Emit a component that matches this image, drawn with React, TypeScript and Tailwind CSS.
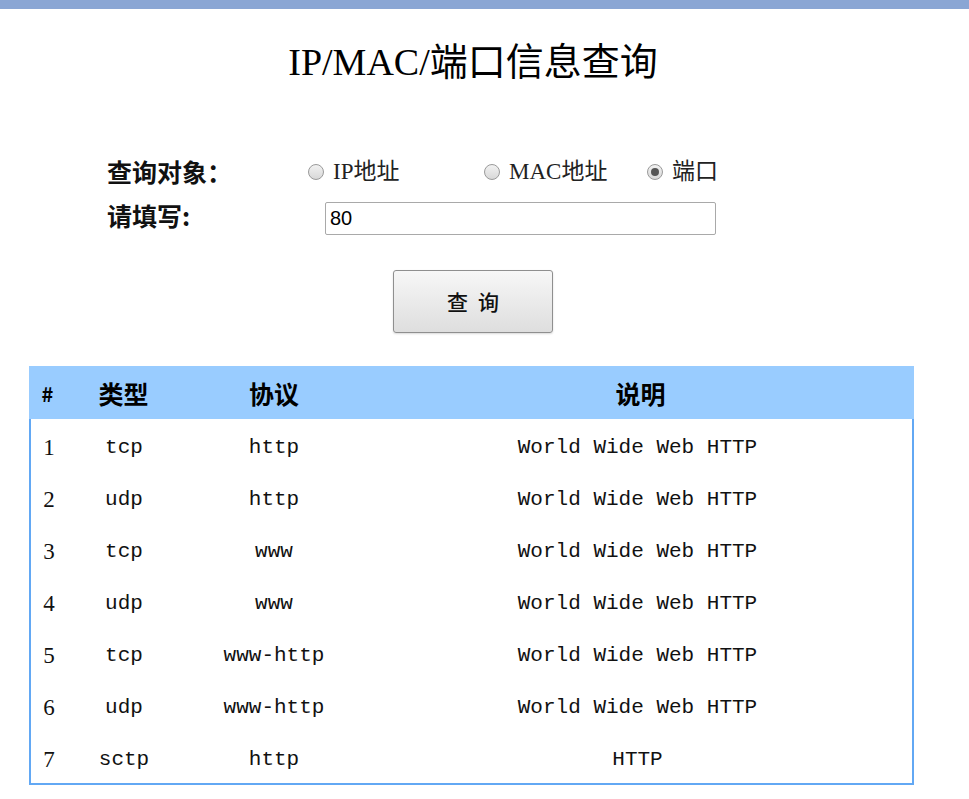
const rows = [
  { id: 1, type: "tcp", proto: "http", desc: "World Wide Web HTTP" },
  { id: 2, type: "udp", proto: "http", desc: "World Wide Web HTTP" },
  { id: 3, type: "tcp", proto: "www", desc: "World Wide Web HTTP" },
  { id: 4, type: "udp", proto: "www", desc: "World Wide Web HTTP" },
  { id: 5, type: "tcp", proto: "www-http", desc: "World Wide Web HTTP" },
  { id: 6, type: "udp", proto: "www-http", desc: "World Wide Web HTTP" },
  { id: 7, type: "sctp", proto: "http", desc: "HTTP" },
];

function Radio({ label, checked, width }: { label: string; checked?: boolean; width: string }) {
  return (
    <label className={`flex items-center gap-[9px] ${width}`}>
      <span className="flex h-[16px] w-[16px] items-center justify-center rounded-full border border-[#9a9a9a] bg-gradient-to-b from-[#f2f2f2] to-[#d8d8d8]">
        {checked && <span className="h-[8px] w-[8px] rounded-full bg-[#555]" />}
      </span>
      <span className="text-[23px] text-[#222] font-['Liberation_Serif','Noto_Sans_CJK_SC',serif]">{label}</span>
    </label>
  );
}

export default function App() {
  return (
    <div className="min-h-[799px] w-full bg-white">
      {/* top bar */}
      <div className="h-[9px] bg-[#8aa6d4]" />

      <div className="w-[946px]">
        <h1 className="mt-[30px] text-center text-[38px] leading-[46px] text-black font-['Liberation_Serif','Noto_Sans_CJK_SC',serif]">
          IP/MAC/端口信息查询
        </h1>

        {/* form */}
        <div className="ml-[107px] mt-[69px] flex flex-col gap-[8px] font-['Noto_Sans_CJK_SC',sans-serif]">
          <div className="flex h-[36px] items-center">
            <span className="w-[201px] text-[25px] font-bold text-[#111]">查询对象：</span>
            <Radio label="IP地址" width="w-[176px]" />
            <Radio label="MAC地址" width="w-[163px]" />
            <Radio label="端口" checked width="w-[90px]" />
          </div>
          <div className="flex h-[36px] items-center">
            <span className="w-[218px] text-[25px] font-bold text-[#111]">请填写:</span>
            <input
              defaultValue="80"
              className="mt-[4px] h-[33px] w-[391px] rounded-[2px] border border-[#a9a9a9] px-[4px] text-[20px] text-black outline-none font-['Liberation_Sans',sans-serif]"
            />
          </div>
        </div>

        <div className="mt-[36px] flex justify-center">
          <button className="h-[63px] w-[160px] rounded-[3px] border border-[#8f8f8f] bg-gradient-to-b from-[#f7f7f7] to-[#dedede] pl-[10px] text-[21px] font-medium tracking-[10px] text-[#111] shadow-[0_1px_2px_rgba(0,0,0,0.15)] font-['Noto_Sans_CJK_SC',sans-serif]">
            查询
          </button>
        </div>

        {/* table */}
        <div className="ml-[29px] mt-[33px] w-[885px]">
          <div className="flex h-[53px] items-center bg-[#99ccff] pt-[3px] text-[25px] font-bold text-black font-['Noto_Sans_CJK_SC',sans-serif]">
            <div className="w-[37px] text-center text-[20px]">#</div>
            <div className="w-[115px] text-center">类型</div>
            <div className="w-[186px] text-center">协议</div>
            <div className="flex-1 text-center">说明</div>
          </div>
          <div className="border-x-2 border-b-2 border-[#62a8f4] font-['Liberation_Mono','Noto_Sans_CJK_SC',monospace] text-[21px] text-[#111]">
            {rows.map((r) => (
              <div key={r.id} className="flex h-[52px] items-center pt-[6px]">
                <div className="w-[36px] text-center font-['Liberation_Serif',serif] text-[23px]">{r.id}</div>
                <div className="w-[114px] text-center">{r.type}</div>
                <div className="w-[186px] text-center">{r.proto}</div>
                <div className="flex-1 pr-[4px] text-center">{r.desc}</div>
              </div>
            ))}
          </div>
        </div>
      </div>
    </div>
  );
}
